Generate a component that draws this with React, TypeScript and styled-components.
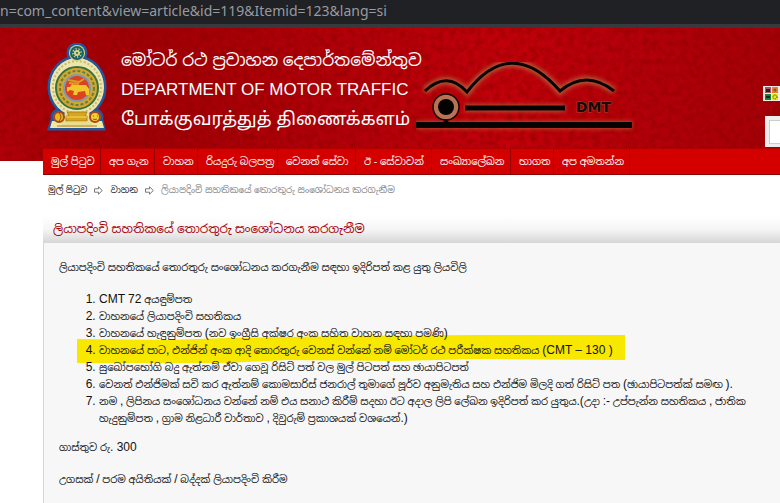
import React from "react";
import styled, { createGlobalStyle } from "styled-components";

const GlobalStyle = createGlobalStyle`
  * { box-sizing: border-box; }
  body {
    margin: 0;
    background: #fff;
    color: #111;
    font-family: "Liberation Sans", "Noto Sans Sinhala", "Noto Sans Tamil", "Noto Sans", sans-serif;
    font-size: 10px;
    line-height: 17px;
  }
`;

const Page = styled.div`
  min-height: 100vh;
  display: flex;
  flex-direction: column;
`;

const AddressBar = styled.div`
  height: 28px;
  background: #202124;
  border-bottom: 4px solid #38393c;
  color: #969ba1;
  font-family: "Noto Sans", "Open Sans", sans-serif;
  font-size: 14px;
  line-height: 21px;
  white-space: nowrap;
`;

const Banner = styled.header`
  position: relative;
  display: flex;
  align-items: flex-start;
  height: 133px;
  padding-left: 47px;
  background: #a90006;
  overflow: hidden;
`;

const Texture = styled.svg`
  position: absolute;
  inset: 0;
  width: 100%;
  height: 100%;
`;

const Crest = styled.svg`
  position: relative;
  flex: none;
  margin-top: 15px;
`;

const Titles = styled.div`
  position: relative;
  display: flex;
  flex-direction: column;
  flex: none;
  width: 295px;
  margin: 18px 0 0 14px;
  color: #fff;
  white-space: nowrap;
`;

const Title = styled.div<{ $size: number }>`
  height: 29px;
  font-size: ${(p) => p.$size}px;
  line-height: 30px;
`;

const Emblem = styled.svg`
  position: relative;
  flex: none;
  margin-top: 34px;
`;

const SideTools = styled.div`
  position: relative;
  display: flex;
  flex-direction: column;
  align-items: flex-end;
  gap: 15px;
  margin: 58px 0 0 auto;
`;

const SearchBox = styled.div`
  width: 15px;
  height: 31px;
  padding: 4px 0 3px 4px;
  background: #eee;

  input {
    display: block;
    width: 100%;
    height: 100%;
    padding: 0;
    border: 1px solid #ccc;
    border-right: 0;
    background: #fff;
  }
`;

const Content = styled.div`
  position: relative;
  display: flex;
  flex: 1;
  flex-direction: column;
  margin: -13px 0 0 43px;
`;

const Nav = styled.nav`
  display: flex;
  height: 27px;
  background: #d40000;
  border-top: 1px solid #b00000;
  border-bottom: 1px solid #8e0000;
`;

const NavLink = styled.a<{ $width: number }>`
  flex: 0 0 ${(p) => p.$width}px;
  padding-left: 8px;
  border-right: 1px solid #920000;
  color: #fff;
  line-height: 26px;
  text-decoration: none;
  white-space: nowrap;
`;

const Breadcrumb = styled.nav`
  display: flex;
  align-items: center;
  gap: 7px;
  height: 30px;
  padding-left: 5px;
  color: #888;
  font-size: 9px;
  white-space: nowrap;

  a { color: #222; text-decoration: none; }
`;

const Heading = styled.h1`
  height: 27px;
  margin: 11px 0 0;
  padding-left: 10px;
  background: linear-gradient(#fff, #f5f5f5 50%, #d6d6d6);
  color: #a8000b;
  font-size: 12px;
  font-weight: 400;
  line-height: 27px;
  white-space: nowrap;
`;

const Article = styled.article`
  flex: 1;
  padding: 16px 20px 0 15px;
  background: #f7f7f7;
  border-left: 1px solid #d5d5d5;

  p { margin: 0 0 15px; }
  ol { margin: 0 0 12px; padding: 0 0 0 40px; }
`;

const Item = styled.li`
  position: relative;

  &::marker { font-size: 12px; }
`;

const Latin = styled.span`
  font-size: 12px;
  line-height: 16px;
`;

const Marker = styled.svg`
  position: absolute;
  z-index: -1;
  left: -22px;
  top: -7px;
`;

const ListLayer = styled.div`
  position: relative;
  z-index: 0;
`;

const navItems: [string, number][] = [
  ["මුල් පිටුව", 58],
  ["අප ගැන", 54],
  ["වාහන", 43],
  ["රියදුරු බලපත්‍ර", 80],
  ["වෙනත් සේවා", 78],
  ["ඊ - සේවාවන්", 76],
  ["සංඛ්‍යාලේඛන", 79],
  ["භාගත", 43],
  ["අප අමතන්න", 76],
];

const Arrow = () => (
  <svg width="9" height="9" viewBox="0 0 9 9" fill="#fff" stroke="#777" aria-hidden="true">
    <path d="M.5 2.8h4V.8L8.3 4.5 4.5 8.2v-2h-4z" />
  </svg>
);

const NationalCrest = () => (
  <Crest width="60" height="88" viewBox="0 0 60 88" aria-hidden="true">
    <g stroke="#24579a" strokeWidth="3" fill="#e9dc93">
      <path d="M5 77h50l2 9H2z" />
      <circle cx="12" cy="74" r="7" />
      <circle cx="48" cy="74" r="7" />
      <circle cx="30" cy="10" r="9" />
      <ellipse cx="30" cy="44" rx="28" ry="30" />
    </g>
    <path d="M5 78h50l2 7H3z" fill="#f0e7a5" />
    <path d="M18 69h24l4 15H14z" fill="#e9dc93" />
    <ellipse cx="30" cy="44" rx="27" ry="29" fill="#ede5ae" />
    <ellipse cx="30" cy="44" rx="24" ry="26" fill="none" stroke="#cdb96c" strokeWidth="2" strokeDasharray="2 2" />
    <circle cx="30" cy="45" r="21" fill="#cfa833" stroke="#3d703b" strokeWidth="2" />
    <circle cx="30" cy="45" r="17" fill="none" stroke="#6f7b33" strokeWidth="2" strokeDasharray="3 2" />
    <circle cx="30" cy="45" r="13" fill="#db421f" stroke="#8398b4" strokeWidth="2" />
    <path d="M20 44h3l2-3 4 1h10l3 4v6h-3l-1-4-7 1-1 3h-4l1-4-4-1-3 2z" fill="#f3c52d" />
    <path d="M21 37l11 2 5-3M22 40l10 1" fill="none" stroke="#d99c26" strokeWidth="2" />
    <circle cx="30" cy="10" r="8" fill="#d7d486" />
    <circle cx="30" cy="10" r="6" fill="#d7d486" stroke="#176266" strokeWidth="2" />
    <circle cx="30" cy="10" r="4" fill="none" stroke="#176266" strokeWidth="2" strokeDasharray="2 1" />
    <circle cx="30" cy="10" r="1" fill="#176266" />
    <path d="M20 69h20l-2 4h2v5H19v-5h3zM10 83h40" fill="#d8a51c" stroke="#ad841d" />
    <path d="M19 74h21M20 79h20" stroke="#f0dc6d" />
    <circle cx="12" cy="74" r="5" fill="#e9b91a" stroke="#a8471e" strokeWidth="2" />
    <circle cx="48" cy="74" r="5" fill="#f2cd34" stroke="#a8471e" strokeWidth="2" />
    <path d="M12 70q4 4 0 8M46 73h1m3 0h1m-5 3q2 1 4 0" fill="none" stroke="#8f5717" />
  </Crest>
);

const CarEmblem = () => (
  <Emblem width="220" height="72" viewBox="0 0 220 72" role="img" aria-label="DMT">
    <defs>
      <filter id="glow" x="-10%" y="-20%" width="120%" height="140%">
        <feGaussianBlur stdDeviation="2" />
      </filter>
    </defs>
    <g stroke="#b57244" strokeWidth="7" filter="url(#glow)" opacity=".8">
      <path d="M9 29Q31 8 51 30Q95-27 144 29Q170 7 198 29" fill="none" />
      <path d="M49 46h100M0 63h216" />
    </g>
    <circle cx="30" cy="45" r="13" fill="#b87452" stroke="#160404" strokeWidth="1.5" />
    <circle cx="30" cy="45" r="8" fill="#050202" />
    <path d="M26 61l4-4 4 4z" fill="#050202" />
    <g stroke="#080202">
      <path d="M9 29Q31 8 51 30Q95-27 144 29Q170 7 198 29" fill="none" strokeWidth="3" />
      <path d="M49 46h100" strokeWidth="5" />
      <path d="M0 63h216" strokeWidth="6" />
    </g>
    <text x="160" y="50" fill="#1c0505" stroke="#9a4a30" strokeWidth="1" paintOrder="stroke" fontFamily="DejaVu Sans" fontWeight="700" fontSize="14">DMT</text>
  </Emblem>
);

export default function App() {
  return (
    <Page>
      <GlobalStyle />
      <AddressBar>n=com_content&amp;view=article&amp;id=119&amp;Itemid=123&amp;lang=si</AddressBar>
      <Banner>
        <Texture aria-hidden="true">
          <defs>
            <filter id="grain">
              <feTurbulence type="fractalNoise" baseFrequency=".16" numOctaves="4" seed="8" />
              <feColorMatrix values="0 0 0 0 .25  0 0 0 0 0  0 0 0 0 0  1.6 0 0 0 -.55" />
            </filter>
            <linearGradient id="shade" x2="1" y2="0">
              <stop offset="0" stopColor="#b00008" />
              <stop offset=".18" stopColor="#a00006" />
              <stop offset=".65" stopColor="#c2000b" />
              <stop offset="1" stopColor="#a50008" />
            </linearGradient>
          </defs>
          <rect width="100%" height="100%" fill="url(#shade)" />
          <rect width="100%" height="100%" filter="url(#grain)" opacity=".7" />
        </Texture>
        <NationalCrest />
        <Titles>
          <Title lang="si" $size={17}>මෝටර් රථ ප්‍රවාහන දෙපාර්තමේන්තුව</Title>
          <Title $size={17}>DEPARTMENT OF MOTOR TRAFFIC</Title>
          <Title lang="ta" $size={18}>போக்குவரத்துத் திணைக்களம்</Title>
        </Titles>
        <CarEmblem />
        <SideTools>
          <svg width="17" height="15" viewBox="0 0 17 15" aria-hidden="true">
            <path d="M0 0h17v15H0z" fill="#f5eee0" />
            <path d="M2 1h6v6H2z" fill="#ad526d" />
            <path d="M9 1h6v6H9z" fill="#ee7b35" />
            <path d="M2 8h6v6H2z" fill="#128335" />
            <path d="M9 8h6v6H9z" fill="#e7e51b" />
            <path d="M3 3h4v3H3zM3 10h4v2H3z" fill="#252525" />
            <circle cx="12" cy="4" r="1" fill="none" stroke="#60452d" />
            <circle cx="12" cy="11" r="2" fill="none" stroke="#333" strokeDasharray="1 1" />
          </svg>
          <SearchBox><input type="text" aria-label="Search" /></SearchBox>
        </SideTools>
      </Banner>
      <Content lang="si">
        <Nav>
          {navItems.map(([label, width]) => (
            <NavLink href="#" key={label} $width={width}>{label}</NavLink>
          ))}
        </Nav>
        <Breadcrumb>
          <a href="#">මුල් පිටුව</a>
          <Arrow />
          <a href="#">වාහන</a>
          <Arrow />
          <span>ලියාපදිංචි සහතිකයේ තොරතුරු සංශෝධනය කරගැනීම</span>
        </Breadcrumb>
        <Heading>ලියාපදිංචි සහතිකයේ තොරතුරු සංශෝධනය කරගැනීම</Heading>
        <Article>
          <ListLayer>
            <p>ලියාපදිංචි සහතිකයේ තොරතුරු සංශෝධනය කරගැනීම සඳහා ඉදිරිපත් කළ යුතු ලියවිලි</p>
            <ol>
              <Item><Latin>CMT 72</Latin> අයඳුම්පත</Item>
              <Item>වාහනයේ ලියාපදිංචි සහතිකය</Item>
              <Item>වාහනයේ හැඳුනුම්පත <Latin>(</Latin>නව ඉංග්‍රීසි අක්ෂර අංක සහිත වාහන සඳහා පමණි<Latin>)</Latin></Item>
              <Item>
                <Marker width="549" height="29" viewBox="0 0 549 29" aria-hidden="true">
                  <path d="M0 4L90 5 150 3 260 1 400 0 548 0V25L400 24 320 26 210 25 150 28 0 28z" fill="#f8e800" />
                </Marker>
                වාහනයේ පාට<Latin>,</Latin> එන්ජින් අංක ආදි තොරතුරු වෙනස් වන්නේ නම් මෝටර් රථ පරීක්ෂක සහතිකය <Latin>(CMT – 130 )</Latin>
              </Item>
              <Item>සුඛෝපභෝගි බදු ඇත්නම් ඒවා ගෙවූ රිසිට් පත් වල මුල් පිටපත් සහ ඡායාපිටපත්</Item>
              <Item>වෙනත් එන්ජිමක් සවි කර ඇත්නම් කොමසාරිස් ජනරාල් තුමාගේ පූර්ව අනුමැතිය සහ එන්ජිම මිලදි ගත් රිසිට් පත <Latin>(</Latin>ඡායාපිටපත්ක් සමඟ <Latin>).</Latin></Item>
              <Item>
                නම <Latin>,</Latin> ලිපිනය සංශෝධනය වන්නේ නම් එය සනාථ කිරීම් සදහා ඊට අදාල ලිපි ලේඛන ඉදිරිපත් කර යුතුය<Latin>.(</Latin>උදා <Latin>:-</Latin> උප්පැන්න සහතිකය <Latin>,</Latin> ජාතික<br />
                හැදුනුම්පත <Latin>,</Latin> ග්‍රාම නිළධාරී වාර්තාව <Latin>,</Latin> දිවුරුම් ප්‍රකාශයක් වශයෙන්<Latin>.)</Latin>
              </Item>
            </ol>
            <p>ගාස්තුව රු<Latin>. 300</Latin></p>
            <p>උගසක් <Latin>/</Latin> පරම අයිතියක් <Latin>/</Latin> බද්දක් ලියාපදිංචි කිරීම</p>
          </ListLayer>
        </Article>
      </Content>
    </Page>
  );
}
